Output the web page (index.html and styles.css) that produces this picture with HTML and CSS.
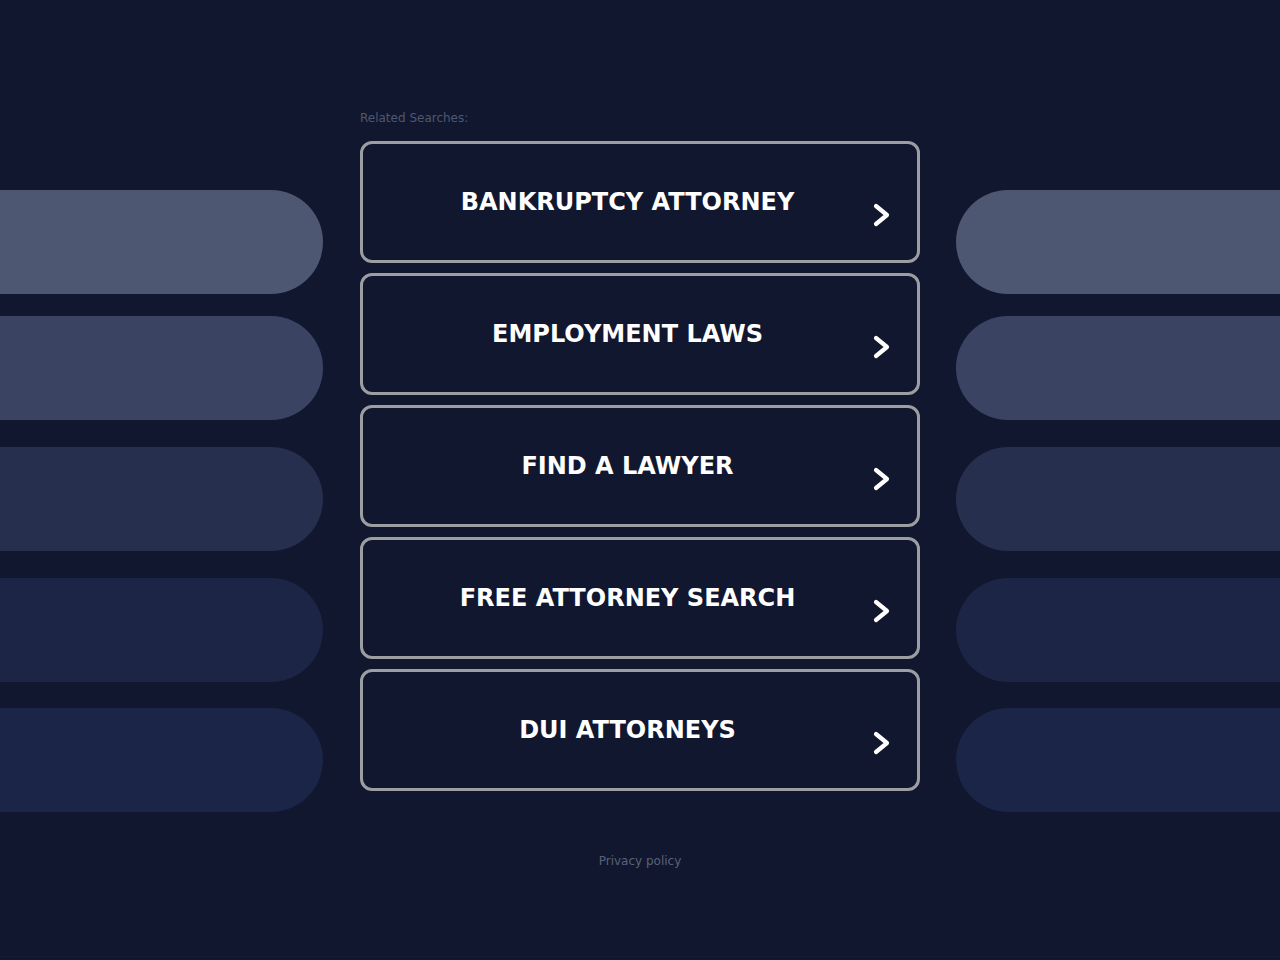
FILE: index.html
```html
<!DOCTYPE html>
<html lang="en">
<head>
<meta charset="utf-8">
<title>Related Searches</title>
<link rel="stylesheet" href="styles.css">
</head>
<body>
<div class="page">
  <div class="side side-left">
    <div class="pill p1"></div>
    <div class="pill p2"></div>
    <div class="pill p3"></div>
    <div class="pill p4"></div>
    <div class="pill p5"></div>
  </div>
  <main class="center">
    <div class="label">Related Searches:</div>
    <div class="list">
      <a class="item" href="#"><span class="item-text">BANKRUPTCY ATTORNEY</span><svg class="chev" viewBox="0 0 20 26"><path d="M4 4 L15 13 L4 22" fill="none" stroke="#fff" stroke-width="4.2" stroke-linecap="round" stroke-linejoin="round"/></svg></a>
      <a class="item" href="#"><span class="item-text">EMPLOYMENT LAWS</span><svg class="chev" viewBox="0 0 20 26"><path d="M4 4 L15 13 L4 22" fill="none" stroke="#fff" stroke-width="4.2" stroke-linecap="round" stroke-linejoin="round"/></svg></a>
      <a class="item" href="#"><span class="item-text">FIND A LAWYER</span><svg class="chev" viewBox="0 0 20 26"><path d="M4 4 L15 13 L4 22" fill="none" stroke="#fff" stroke-width="4.2" stroke-linecap="round" stroke-linejoin="round"/></svg></a>
      <a class="item" href="#"><span class="item-text">FREE ATTORNEY SEARCH</span><svg class="chev" viewBox="0 0 20 26"><path d="M4 4 L15 13 L4 22" fill="none" stroke="#fff" stroke-width="4.2" stroke-linecap="round" stroke-linejoin="round"/></svg></a>
      <a class="item" href="#"><span class="item-text">DUI ATTORNEYS</span><svg class="chev" viewBox="0 0 20 26"><path d="M4 4 L15 13 L4 22" fill="none" stroke="#fff" stroke-width="4.2" stroke-linecap="round" stroke-linejoin="round"/></svg></a>
    </div>
    <div class="footer"><a href="#" class="privacy">Privacy policy</a></div>
  </main>
  <div class="side side-right">
    <div class="pill p1"></div>
    <div class="pill p2"></div>
    <div class="pill p3"></div>
    <div class="pill p4"></div>
    <div class="pill p5"></div>
  </div>
</div>
</body>
</html>
```

FILE: styles.css
```css
html, body {
  margin: 0;
  padding: 0;
  background: #11172e;
  font-family: "DejaVu Sans", "Liberation Sans", sans-serif;
}

.page {
  display: grid;
  grid-template-columns: 323px 1fr 324px;
  height: 957px;
  border-bottom: 1px solid #151c35;
  box-sizing: border-box;
}

.side {
  display: flex;
  flex-direction: column;
  padding-top: 190px;
}

.pill {
  height: 104px;
  flex: none;
}

.side-left .pill { border-radius: 0 52px 52px 0; }
.side-right .pill { border-radius: 52px 0 0 52px; }

.p1 { background: #4d5772; }
.p2 { background: #3a4462; margin-top: 22px; }
.p3 { background: #262f4e; margin-top: 27px; }
.p4 { background: #1c2546; margin-top: 27px; }
.p5 { background: #1b2548; margin-top: 26px; }

.center {
  display: flex;
  flex-direction: column;
  padding: 110px 36px 0 37px;
}

.label {
  font-size: 12px;
  color: #4f5771;
  line-height: 16px;
  height: 16px;
  margin-bottom: 15px;
}

.list {
  display: flex;
  flex-direction: column;
  gap: 10px;
}

.item {
  position: relative;
  display: flex;
  align-items: center;
  justify-content: center;
  height: 122px;
  box-sizing: border-box;
  border: 3px solid #9d9ea2;
  border-radius: 12px;
  padding: 0 25px 0 0;
  text-decoration: none;
  color: #ffffff;
}

.item-text {
  font-weight: bold;
  font-size: 24px;
  line-height: 30px;
}

.chev {
  position: absolute;
  right: 25px;
  top: 58px;
  width: 20px;
  height: 26px;
}

.footer {
  margin-top: 59px;
  text-align: center;
}

.privacy {
  font-size: 12px;
  color: #5a6178;
  text-decoration: none;
}
```
